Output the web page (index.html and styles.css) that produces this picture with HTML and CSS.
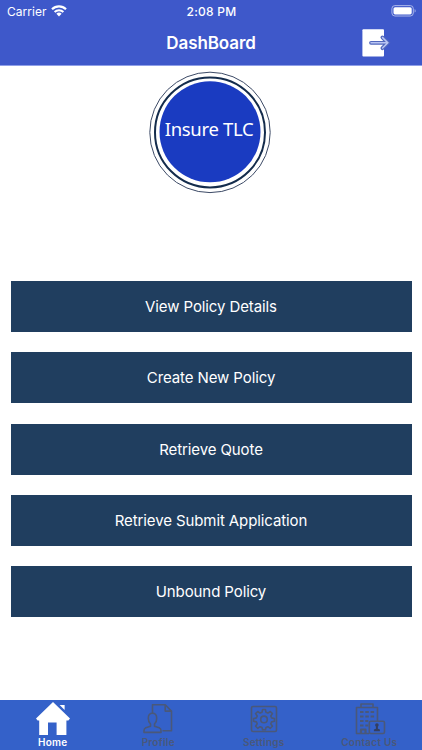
FILE: index.html
```html
<!DOCTYPE html>
<html lang="en">
<head>
    <meta charset="UTF-8">
    <meta name="viewport" content="width=device-width, initial-scale=1.0">
    <title>DashBoard</title>
    <link rel="stylesheet" href="styles.css">
</head>
<body>

<header class="header">
    <div class="status-bar">
        <div class="carrier">
            <span>Carrier</span>
            <svg class="wifi" width="16" height="12" viewBox="0 0 16 12">
                <path d="M1 4.2a10 10 0 0 1 14 0" fill="none" stroke="#fff" stroke-width="2.2"/>
                <path d="M3.6 7a6.3 6.3 0 0 1 8.8 0" fill="none" stroke="#fff" stroke-width="2"/>
                <path d="M8 11.4 5.4 8.8a3.7 3.7 0 0 1 5.2 0z" fill="#fff"/>
            </svg>
        </div>
        <span class="time">2:08 PM</span>
        <svg class="battery" width="26" height="12" viewBox="0 0 26 12">
            <rect x=".9" y=".6" width="21.4" height="10.4" rx="3" fill="none" stroke="#a9b6ea"/>
            <rect x="2.5" y="2.2" width="18.2" height="7.2" rx="1.6" fill="#fff"/>
            <path d="M23.6 4v3.6c1.4-.5 1.4-3.1 0-3.6z" fill="#a9b6ea"/>
        </svg>
    </div>
    <div class="nav-bar">
        <h1 class="title">DashBoard</h1>
        <svg class="logout" width="30" height="30" viewBox="0 0 30 30">
            <rect x="1.4" y="1.2" width="21.6" height="27.4" rx="1" fill="#fff"/>
            <path d="M10 14.8h16M21.4 9.4l5.4 5.4-5.4 5.4" fill="none" stroke="#5268bd" stroke-width="3.8" stroke-linecap="round"/>
            <path d="M10 14.8h16M21.6 9.6l5.2 5.2-5.2 5.2" fill="none" stroke="#b9c5f3" stroke-width="1.5" stroke-linecap="round"/>
        </svg>
    </div>
</header>

<main class="content">
    <svg class="logo" width="124" height="124" viewBox="0 0 124 124">
        <circle cx="62" cy="62.4" r="60.2" fill="#fff" stroke="#3c4a66" stroke-width="1"/>
        <circle cx="62" cy="62.4" r="55" fill="#fff" stroke="#142c4c" stroke-width="2"/>
        <circle cx="62" cy="61.8" r="50.5" fill="#1a3bc1"/>
        <text class="logo-text" x="61.2" y="65.5" text-anchor="middle" textLength="89">Insure TLC</text>
    </svg>

    <div class="menu">
        <button type="button" class="menu-button">View Policy Details</button>
        <button type="button" class="menu-button">Create New Policy</button>
        <button type="button" class="menu-button">Retrieve Quote</button>
        <button type="button" class="menu-button">Retrieve Submit Application</button>
        <button type="button" class="menu-button">Unbound Policy</button>
    </div>
</main>

<nav class="tab-bar">
    <a class="tab active">
        <svg width="36" height="36" viewBox="0 0 36 36">
            <path d="M18 2 1 18.6l1.6 1.9h1.6V35H13V22.5h8.6V35h9.8V20.5h2l1.6-1.9z" fill="#fff"/>
            <path d="M24.6 5h5v5z" fill="#fff"/>
        </svg>
        <span>Home</span>
    </a>
    <a class="tab">
        <svg width="36" height="36" viewBox="0 0 36 36">
            <g fill="none" stroke="#4a5879" stroke-width="1.6" stroke-linejoin="round">
                <path d="M12.5 13V4.8h12.7l6.3 6.3v19.7H22.5M25.2 4.8v6.3h6.3"/>
                <path d="M8.3 18.2c0-3.6 1.7-5 4.2-5s4.2 1.4 4.2 5c0 2.8-1 4.8-2.2 5.8v2.2l4.7 1.6c1.3.5 1.8 1.6 1.8 3v1.6H4v-1.6c0-1.4.5-2.5 1.8-3l4.7-1.6V24c-1.2-1-2.2-3-2.2-5.8z"/>
            </g>
        </svg>
        <span>Profile</span>
    </a>
    <a class="tab">
        <svg width="36" height="36" viewBox="0 0 36 36">
            <g fill="none" stroke="#4a5879" stroke-width="1.6" stroke-linejoin="round">
                <rect x="5.5" y="6.5" width="25" height="25" rx="1.5"/>
                <path d="M16.6 9.5h2.8l.6 2.8 1.9.8 2.4-1.6 2.1 2.1-1.6 2.4.8 1.9 2.8.6v2.8l-2.8.6-.8 1.9 1.6 2.4-2.1 2.1-2.4-1.6-1.9.8-.6 2.3h-2.8l-.6-2.3-1.9-.8-2.4 1.6-2.1-2.1 1.6-2.4-.8-1.9-2.8-.6v-2.8l2.8-.6.8-1.9-1.6-2.4 2.1-2.1 2.4 1.6 1.9-.8z"/>
                <circle cx="18" cy="19.4" r="3.3"/>
            </g>
        </svg>
        <span>Settings</span>
    </a>
    <a class="tab">
        <svg width="36" height="36" viewBox="0 0 36 36">
            <g fill="none" stroke="#4a5879" stroke-width="1.6" stroke-linejoin="round">
                <path d="M18 33.5H5.5V7.5H10V4h12v3.5h4.5V21M10 7.5h12"/>
                <path d="M9 12h3.5M14.3 12h3.5M19.6 12h3.5M9 16.5h3.5M14.3 16.5h3.5M19.6 16.5h3.5M9 21h3.5M14.3 21h3M9 25.5h3.5M14.3 25.5h3M10 33v-3.5h4.5V33" stroke-width="2.2"/>
                <rect x="18.3" y="21.3" width="15.2" height="12.2" rx="1.5"/>
            </g>
            <circle cx="25.9" cy="25" r="1.8" fill="#343f61"/>
            <path d="M24.9 25h2v3.8l2 .8v1.6h-6v-1.6l2-.8z" fill="#343f61"/>
        </svg>
        <span>Contact Us</span>
    </a>
</nav>

</body>
</html>
```
FILE: styles.css
```css
* {
    box-sizing: border-box;
}
body {
    display: flex;
    flex-direction: column;
    height: 750px;
    margin: 0;
    font-family: Inter, "Liberation Sans", sans-serif;
    background-color: #fff;
    color: #fff;
    overflow: hidden;
}
.header {
    height: 66px;
    background-color: #3e58ca;
    border-bottom: 1px solid #8f9fe8;
}
.status-bar {
    display: grid;
    grid-template-columns: 1fr auto 1fr;
    align-items: center;
    height: 22px;
    padding: 0 6px 0 7px;
    font-size: 12px;
}
.carrier {
    display: flex;
    align-items: center;
    gap: 4px;
    letter-spacing: 0.05px;
}
.wifi {
    margin-top: -1px;
}
.time {
    font-size: 12px;
    font-weight: 500;
    letter-spacing: 0.25px;
}
.battery {
    justify-self: end;
    margin-top: -1px;
    margin-right: -1px;
}
.nav-bar {
    display: grid;
    grid-template-columns: 1fr auto 1fr;
    align-items: center;
    height: 42px;
}
.title {
    grid-column: 2;
    margin: 0;
    font-size: 17px;
    font-weight: 600;
    letter-spacing: -0.1px;
}
.logout {
    justify-self: end;
    margin-right: 31px;
}

.content {
    display: flex;
    flex: 1;
    flex-direction: column;
    align-items: center;
    padding: 4px 10.5px 0;
}
.logo {
    margin-right: 2px;
}
.logo-text {
    font-family: "Noto Sans", sans-serif;
    font-size: 18.5px;
    fill: #fff;
}
.menu {
    display: flex;
    flex-direction: column;
    gap: 20.25px;
    width: 100%;
    margin-top: 87px;
}
.menu-button {
    height: 51px;
    padding: 0;
    border: none;
    background-color: #203e5f;
    color: #fff;
    font-family: inherit;
    font-size: 15px;
    letter-spacing: -0.1px;
}

.tab-bar {
    display: grid;
    grid-template-columns: repeat(4, 1fr);
    height: 50px;
    background-color: #3461c9;
}
.tab {
    display: flex;
    flex-direction: column;
    align-items: center;
    color: #4a5879;
    font-size: 10px;
    font-weight: 600;
    line-height: 12px;
    letter-spacing: 0.25px;
}
.tab.active {
    color: #fff;
}
```
